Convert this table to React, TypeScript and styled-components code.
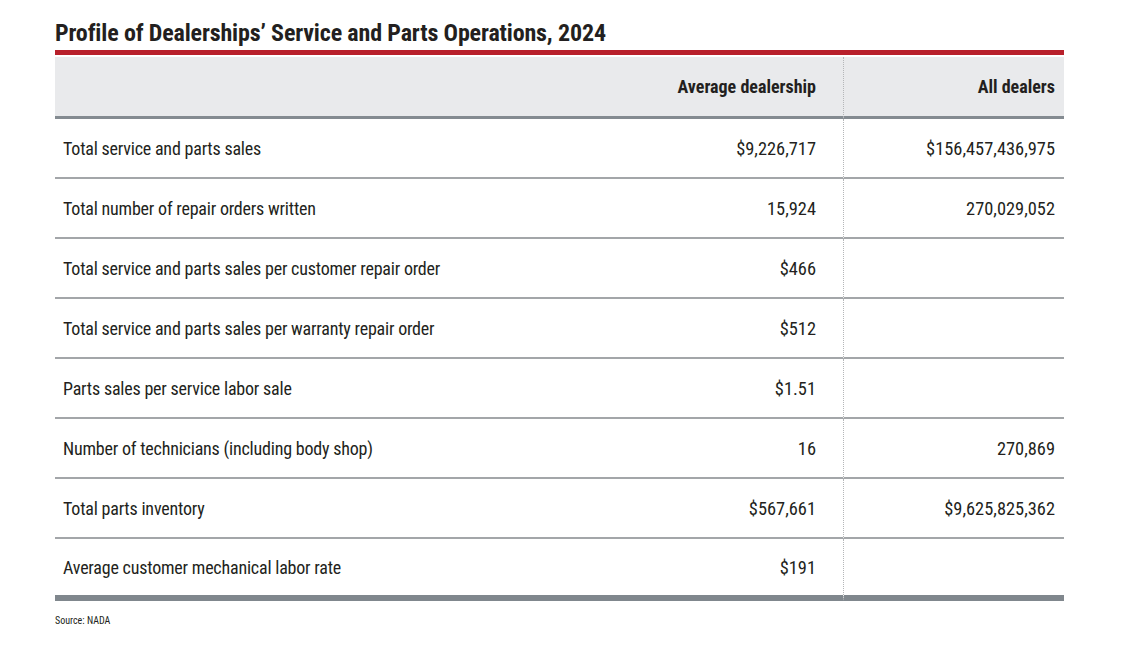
import React from 'react';
import styled, { createGlobalStyle } from 'styled-components';

const GlobalStyle = createGlobalStyle`
    html, body {
        margin: 0;
        padding: 0;
        background: #ffffff;
    }
    body {
        font-family: "Roboto Condensed", "Liberation Sans Narrow", "Arial Narrow", "DejaVu Sans Condensed", sans-serif;
        color: #231f20;
    }
`;

const Page = styled.div`
    width: 1129px;
    height: 661px;
    padding: 18px 0 0 55px;
    box-sizing: border-box;
`;

const Figure = styled.div`
    width: 1009px;
`;

const Title = styled.h1`
    margin: 0;
    font-size: 24px;
    line-height: 30px;
    letter-spacing: -0.15px;
    font-weight: 700;
    color: #231f20;
    white-space: nowrap;
`;

const RedRule = styled.div`
    height: 5px;
    margin-top: 2px;
    background: #b8202b;
    border-bottom: 2px solid #ffffff;
`;

const Table = styled.div`
    display: grid;
    grid-template-columns: 564px 224px 221px;
`;

const HeadCell = styled.div<{ $divider?: boolean }>`
    height: 59px;
    display: flex;
    align-items: center;
    justify-content: flex-end;
    padding-right: ${(p) => (p.$divider ? '9px' : '27px')};
    background: #e9eaec;
    border-bottom: 3px solid #848b91;
    border-left: ${(p) => (p.$divider ? '1px dotted #b4b6b8' : 'none')};
    font-size: 18px;
    font-weight: 700;
    white-space: nowrap;
`;

const Cell = styled.div<{ $align?: 'left' | 'right'; $divider?: boolean; $last?: boolean }>`
    height: ${(p) => (p.$last ? '56px' : '58px')};
    display: flex;
    align-items: center;
    justify-content: ${(p) => (p.$align === 'left' ? 'flex-start' : 'flex-end')};
    padding-left: ${(p) => (p.$align === 'left' ? '8px' : '0')};
    padding-right: ${(p) => (p.$align === 'left' ? '0' : p.$divider ? '9px' : '27px')};
    border-bottom: ${(p) => (p.$last ? '6px solid #80878d' : '2px solid #a3a6a9')};
    border-left: ${(p) => (p.$divider ? '1px dotted #b4b6b8' : 'none')};
    font-size: ${(p) => (p.$align === 'left' ? '18px' : '18.4px')};
    letter-spacing: ${(p) => (p.$align === 'left' ? '-0.2px' : '0')};
    font-weight: 400;
    white-space: nowrap;
`;

const Source = styled.div`
    margin-top: 14px;
    font-size: 10px;
    color: #231f20;
`;

const rows: [string, string, string][] = [
    ['Total service and parts sales', '$9,226,717', '$156,457,436,975'],
    ['Total number of repair orders written', '15,924', '270,029,052'],
    ['Total service and parts sales per customer repair order', '$466', ''],
    ['Total service and parts sales per warranty repair order', '$512', ''],
    ['Parts sales per service labor sale', '$1.51', ''],
    ['Number of technicians (including body shop)', '16', '270,869'],
    ['Total parts inventory', '$567,661', '$9,625,825,362'],
    ['Average customer mechanical labor rate', '$191', ''],
];

const App = () => {
    return (
        <Page>
            <GlobalStyle />
            <Figure>
                <Title>Profile of Dealerships’ Service and Parts Operations, 2024</Title>
                <RedRule />
                <Table>
                    <HeadCell />
                    <HeadCell>Average dealership</HeadCell>
                    <HeadCell $divider>All dealers</HeadCell>
                    {rows.map(([label, avg, all], i) => {
                        const last = i === rows.length - 1;
                        return (
                            <React.Fragment key={label}>
                                <Cell $align="left" $last={last}>{label}</Cell>
                                <Cell $last={last}>{avg}</Cell>
                                <Cell $divider $last={last}>{all}</Cell>
                            </React.Fragment>
                        );
                    })}
                </Table>
                <Source>Source: NADA</Source>
            </Figure>
        </Page>
    );
};

export default App;
